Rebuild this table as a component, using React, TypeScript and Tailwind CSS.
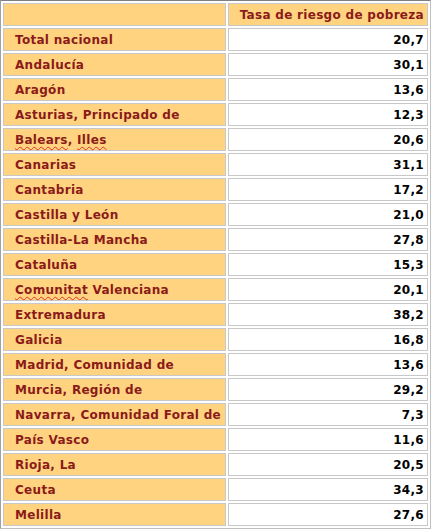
import React from 'react'

const rows: [string, string][] = [
  ['Total nacional', '20,7'],
  ['Andalucía', '30,1'],
  ['Aragón', '13,6'],
  ['Asturias, Principado de', '12,3'],
  ['Balears, Illes', '20,6'],
  ['Canarias', '31,1'],
  ['Cantabria', '17,2'],
  ['Castilla y León', '21,0'],
  ['Castilla-La Mancha', '27,8'],
  ['Cataluña', '15,3'],
  ['Comunitat Valenciana', '20,1'],
  ['Extremadura', '38,2'],
  ['Galicia', '16,8'],
  ['Madrid, Comunidad de', '13,6'],
  ['Murcia, Región de', '29,2'],
  ['Navarra, Comunidad Foral de', '7,3'],
  ['País Vasco', '11,6'],
  ['Rioja, La', '20,5'],
  ['Ceuta', '34,3'],
  ['Melilla', '27,6'],
]

// words the browser spell checker flagged in the screenshot
const flagged = ['Balears,', 'Illes', 'Comunitat']

function Label({ text }: { text: string }) {
  const words = text.split(' ')
  return (
    <>
      {words.map((w, i) => {
        const isFlagged = flagged.includes(w)
        const word = w.endsWith(',') && isFlagged ? w.slice(0, -1) : w
        return (
          <React.Fragment key={i}>
            {i > 0 && ' '}
            {isFlagged ? (
              <span className="underline decoration-wavy decoration-[#e03030] decoration-1 underline-offset-2">
                {word}
              </span>
            ) : (
              word
            )}
            {isFlagged && w.endsWith(',') ? ',' : ''}
          </React.Fragment>
        )
      })}
    </>
  )
}

export default function App() {
  return (
    <div className="w-[431px] bg-white" style={{ fontFamily: '"DejaVu Sans", Verdana, sans-serif' }}>
      <table className="w-[431px] border-separate border-spacing-[2px] border border-t-[#808080] border-l-[#a0a0a0] border-r-[#c0c0c0] border-b-[#c0c0c0] text-[12px] font-bold tracking-[0.3px]">
        <tbody>
          <tr>
            <td className="h-[23px] w-[223px] p-0 border border-[#c8c8c8] bg-[#ffd37f]"></td>
            <td className="h-[23px] p-0 pr-[3px] border border-[#c8c8c8] bg-[#ffd37f] text-right text-[#8b1a1a]">
              Tasa de riesgo de pobreza
            </td>
          </tr>
          {rows.map(([name, value]) => (
            <tr key={name}>
              <td className="h-[23px] w-[223px] p-0 pl-[11px] border border-[#c8c8c8] bg-[#ffd37f] text-[#8b1a1a] whitespace-nowrap">
                <Label text={name} />
              </td>
              <td className="h-[23px] p-0 pr-[3px] border border-[#c8c8c8] bg-white text-right text-black">
                {value}
              </td>
            </tr>
          ))}
        </tbody>
      </table>
    </div>
  )
}
